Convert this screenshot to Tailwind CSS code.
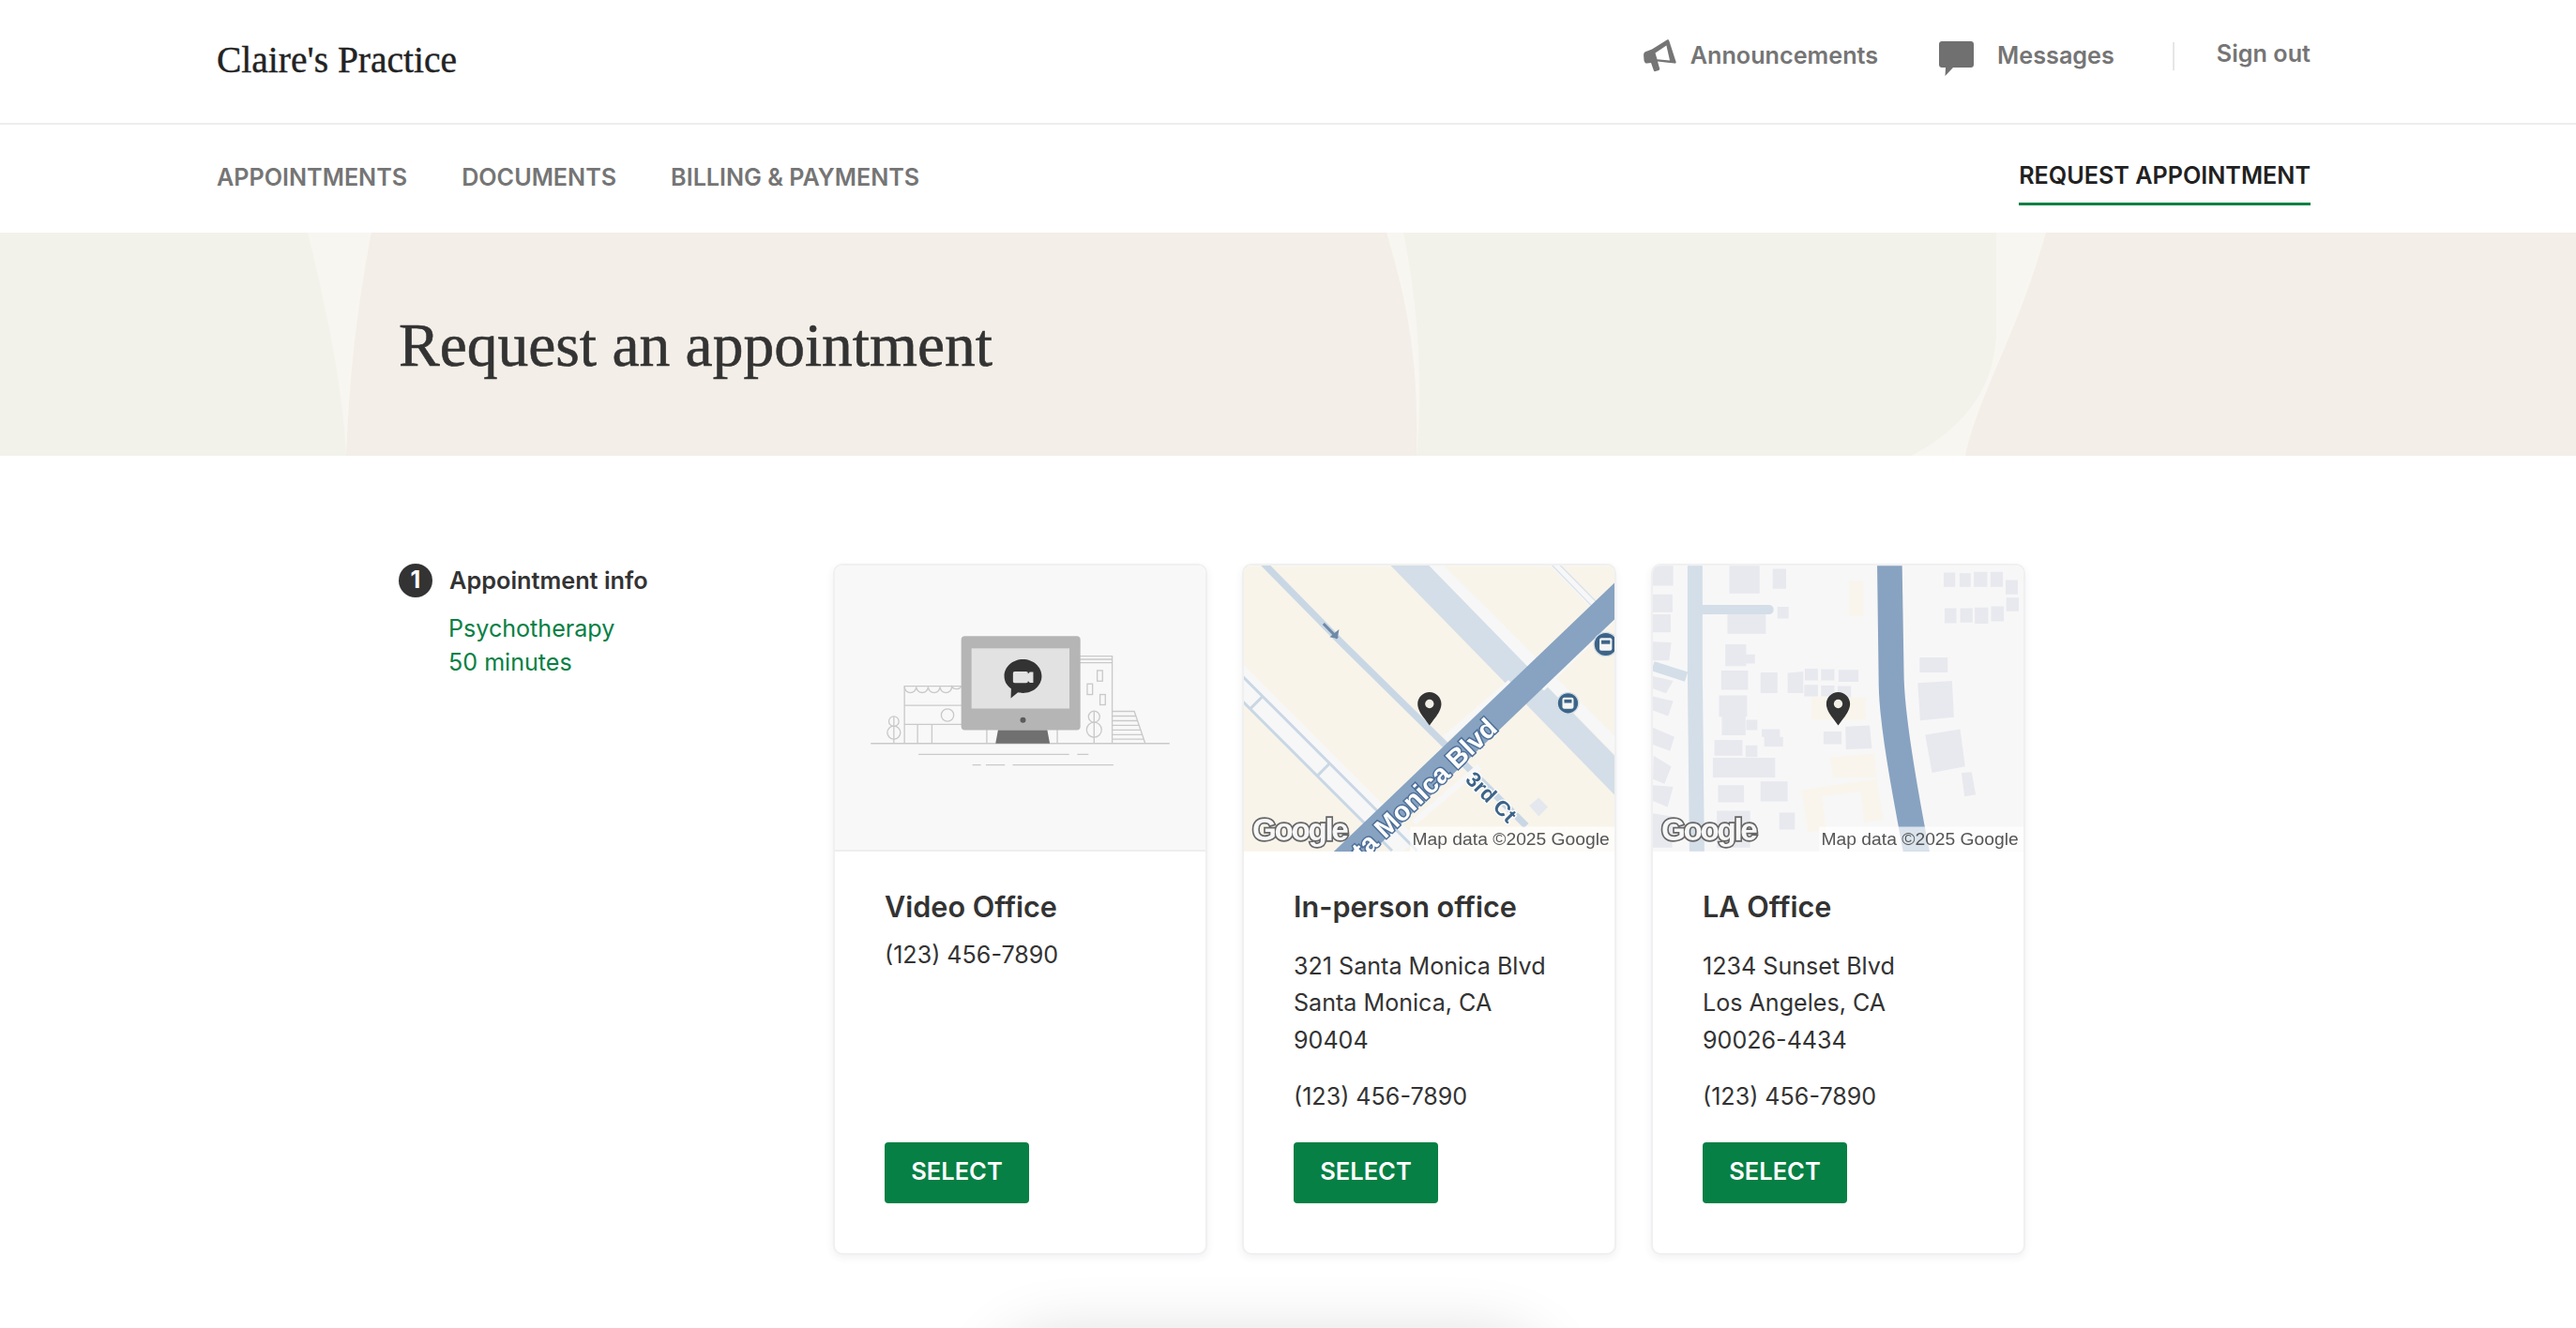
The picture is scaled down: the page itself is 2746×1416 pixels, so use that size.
<!DOCTYPE html>
<html lang="en">
<head>
  <meta charset="UTF-8" />
  <title>Request an appointment</title>
  <script src="https://cdn.jsdelivr.net/npm/@tailwindcss/browser@4"></script>
</head>
<body class="relative h-[1416px] overflow-hidden bg-white font-['Inter',sans-serif] text-[#333333]">

  <!-- top bar -->
  <header class="flex h-[133px] items-center justify-between border-b-2 border-[#ededed] pl-[231px] pr-[283px]">
    <div class="font-['Liberation_Serif',serif] text-[39.500px] leading-none text-[#222222] mb-[1px] [-webkit-text-stroke:0.4px]">Claire's Practice</div>
    <div class="flex items-center text-[25.200px] font-semibold text-[#757575] mb-[12px]">
      <svg class="mr-[15px] h-[35px] w-[35px]" viewBox="0 0 35 35">
        <path fill="#757575" fill-rule="evenodd" d="M25 0.5c1 -.5 2 0 2.300 1L34.600 24c.3 1 -.4 1.800 -1.400 1.600L15 23.600l2.200 7.600c.2.8 -.2 1.400 -1 1.700l-3.600 1.200c-.8.2 -1.400 -.1 -1.700 -.9L8 25 4 25.600C2 25.800 1 24.500.5 22.500L.1 17C0 15 .8 13.500 2.500 13L9 10.500zM24.400 6.500 12.500 14.500l2 6.700 13.500 1.300z"/>
      </svg>
      <span>Announcements</span>
      <svg class="ml-[65px] mr-[25px] mt-[6px] h-[37px] w-[37px]" viewBox="0 0 37 37">
        <path fill="#707070" d="M3 0h31c1.700 0 3 1.300 3 3v22c0 1.700 -1.300 3 -3 3H15L6.500 37l.5 -9H3c-1.700 0 -3 -1.300 -3 -3V3c0 -1.700 1.300 -3 3 -3z"/>
      </svg>
      <span>Messages</span>
      <span class="ml-[62px] mr-[45px] h-[30px] w-[2px] bg-[#e6e6e6]"></span>
      <span class="mb-[4px]">Sign out</span>
    </div>
  </header>

  <!-- section nav -->
  <nav class="flex h-[115px] justify-between pl-[231px] pr-[283px] text-[25.150px] font-semibold text-[#757575]">
    <div class="flex items-center gap-[58px] mb-[2px]">
      <a>APPOINTMENTS</a>
      <a>DOCUMENTS</a>
      <a>BILLING &amp; PAYMENTS</a>
    </div>
    <a class="mt-[37px] h-[49px] border-b-[3px] border-[#068044] leading-[35px] text-[#212121]">REQUEST APPOINTMENT</a>
  </nav>

  <!-- banner -->
  <section class="relative flex h-[238px] items-center bg-[#f3eee7] pl-[425px]">
    <svg class="absolute left-0 top-0 h-[238px] w-[2746px]" viewBox="0 0 2746 238">
      <path fill="#f3f2ea" d="M0 0H328C350 90 366 170 369 238H0z"/>
      <path fill="#f8f6f1" d="M328 0H396C380 80 372 160 369 238C366 170 350 90 328 0z"/>
      <path fill="#f8f6f1" d="M1478 0H2181C2150 110 2110 170 2095 238H1510C1512 150 1505 90 1478 0z"/>
      <path fill="#f3f2ea" d="M1496 0H2128V110C2125 170 2090 210 2038 238H1510C1516 170 1514 90 1496 0z"/>
    </svg>
    <h1 class="relative mt-[4px] font-['Liberation_Serif',serif] text-[65.500px] leading-none text-[#333333] [-webkit-text-stroke:0.6px]">Request an appointment</h1>
  </section>

  <!-- step + location cards -->
  <main class="flex pl-[425px] pt-[115px]">
    <aside class="w-[463px]">
      <div class="flex items-center">
        <span class="flex h-[36px] w-[36px] items-center justify-center rounded-full bg-[#333333] text-[25px] font-bold text-white">1</span>
        <span class="ml-[18px] text-[25.300px] font-semibold leading-[36px]">Appointment info</span>
      </div>
      <div class="ml-[53px] mt-[15px] text-[25.100px] leading-[36px] text-[#068044]">
        <div>Psychotherapy</div>
        <div>50 minutes</div>
      </div>
    </aside>

    <div class="flex gap-[37px]">
      <!-- video office -->
      <article class="flex h-[737px] w-[399px] flex-col overflow-hidden rounded-[10px] border-2 border-[#f0f0f0] bg-white shadow-[0_3px_8px_rgba(60,60,100,0.07)]">
        <div class="h-[305px] border-b-2 border-[#eeeeee] bg-[#f8f8f8]">
          <svg class="h-[305px] w-[395px]" viewBox="27 36 1188 916" fill="none" stroke="#c9c9c9" stroke-width="4">
            <path d="M142 606H1100M295 641H778M804 641H840M468 675H495M511 675H572M597 675H920"/>
            <path d="M250 606V422H440M250 484H440M250 545H440M292 545V606M338 545V606M514 555V606M740 555V606"/>
            <path d="M250 424a19 19 0 0 0 38 0a19 19 0 0 0 38 0a19 19 0 0 0 38 0a19 19 0 0 0 38 0a19 19 0 0 0 30 0"/>
            <circle cx="388" cy="515" r="20"/>
            <path d="M216 520V606"/><circle cx="216" cy="535" r="16"/><circle cx="216" cy="571" r="21"/>
            <path d="M810 326H916V606M810 336H916M810 347H916"/>
            <rect x="868" y="372" width="17" height="34"/><rect x="836" y="415" width="17" height="34"/><rect x="877" y="449" width="17" height="33"/>
            <path d="M858 502V606"/><circle cx="858" cy="520" r="18"/><circle cx="858" cy="562" r="24"/>
            <path d="M916 503H987L1022 606M916 518H992M916 533H997M916 548H1002M916 563H1007M916 578H1012M916 592H1017"/>
            <rect x="432" y="262" width="382" height="301" rx="12" fill="#b5b5b5" stroke="none"/>
            <rect x="465" y="301" width="314" height="193" fill="#e2e2e2" stroke="none"/>
            <path d="M550 563H708L716 606H542z" fill="#707070" stroke="none"/>
            <circle cx="630" cy="531" r="9" fill="#5b5b5b" stroke="none"/>
            <path d="M630 336c33 0 60 24 60 54s-27 54 -60 54c-8 0 -14 -1 -16 -2l-23 19 1 -31c-14 -10 -22 -24 -22 -40 0 -30 27 -54 60 -54z" fill="#333333" stroke="none"/>
            <path d="M604 375h36c4 0 6 2 6 6v2l6 -6 11 0v34l-11 0 -6 -6v2c0 3 -2 5 -6 5h-36c-4 0 -6 -2 -6 -5v-26c0 -4 2 -6 6 -6z" fill="#e2e2e2" stroke="none"/>
          </svg>
        </div>
        <div class="flex flex-1 flex-col px-[53px] pb-[53px] pt-[37px]">
          <h2 class="text-[30.600px] font-semibold leading-[44px]">Video Office</h2>
          <p class="mt-[10px] text-[25.100px] leading-[39.400px] text-[#333333]">(123) 456-7890</p>
          <button class="mt-auto h-[65px] w-[154px] rounded-[4px] bg-[#068044] pb-[2px] text-[25.500px] font-semibold text-white">SELECT</button>
        </div>
      </article>

      <!-- in-person office -->
      <article class="flex h-[737px] w-[399px] flex-col overflow-hidden rounded-[10px] border-2 border-[#f0f0f0] bg-white shadow-[0_3px_8px_rgba(60,60,100,0.07)]">
        <div class="h-[305px]">
          <svg class="h-[305px] w-[395px] blur-[0.4px]" viewBox="45 36 1188 916" fill="none" stroke-linecap="butt">
            <rect x="45" y="36" width="1188" height="916" fill="#f8f4ea"/>
            <path d="M558 -64L1333 710" stroke="#f7f7f7" stroke-width="40"/>
            <path d="M478 -66L1333 810" stroke="#d3dee8" stroke-width="88"/>
            <path d="M1000 -10L1165 160" stroke="#f7f7f7" stroke-width="26"/>
            <path d="M990 -10L1160 165M1015 -10L1178 155" stroke="#d9e2eb" stroke-width="4"/>
            <path d="M90 10L360 285L690 610L770 690L950 870" stroke="#c9d7e5" stroke-width="22"/>
            <path d="M0 330L620 950" stroke="#f7f7f7" stroke-width="28"/>
            <path d="M0 390L560 950" stroke="#f7f7f7" stroke-width="57"/>
            <path d="M0 350L600 950M0 430L520 950" stroke="#c9d7e5" stroke-width="9"/>
            <path d="M105 455L65 495M320 670L280 710" stroke="#c9d7e5" stroke-width="9"/>
            <path d="M690 590L900 410M1000 430L1233 200M590 860L800 680" stroke="#f7f7f7" stroke-width="20"/>
            <path d="M1333 54L295 1048" stroke="#87a3c1" stroke-width="85"/>
            <path d="M300 222L345 268" stroke="#6f8aa8" stroke-width="9"/><path d="M345 270L350 240L320 265z" fill="#6f8aa8"/>
            <path d="M960 805l30 -25 30 30 -30 30z" fill="#e4e8ee"/>
            <circle cx="1205" cy="288" r="38" fill="#3d6488" stroke="#d3dee8" stroke-width="4"/>
            <rect x="1185" y="268" width="40" height="40" rx="6" fill="#f5f5f5"/><rect x="1191" y="275" width="28" height="12" fill="#3d6488"/>
            <circle cx="1084" cy="477" r="34" fill="#3d6488" stroke="#d3dee8" stroke-width="4"/>
            <rect x="1066" y="459" width="36" height="36" rx="6" fill="#f5f5f5"/><rect x="1072" y="465" width="24" height="11" fill="#3d6488"/>
            <text transform="translate(862 562) rotate(-44)" text-anchor="end" font-family="Liberation Sans" font-weight="700" font-size="86" fill="#ffffff" stroke="#4d6f99" stroke-width="9" paint-order="stroke">Santa Monica Blvd</text>
            <text transform="translate(752 725) rotate(45)" font-family="Liberation Sans" font-weight="700" font-size="68" fill="#3d6488" stroke="#ffffff" stroke-width="8" paint-order="stroke">3rd Ct</text>
            <path d="M640 441c21 0 38 17 38 38 0 25 -25 50 -38 69c-13 -19 -38 -44 -38 -69 0 -21 17 -38 38 -38z" fill="#333333"/>
            <circle cx="640" cy="479" r="14" fill="#f2efe6"/>
            <rect x="578" y="873" width="655" height="79" fill="#ffffff" fill-opacity="0.7"/>
            <text x="585" y="932" font-family="Liberation Sans" font-size="58" fill="#555555">Map data ©2025 Google</text>
            <text x="72" y="918" font-family="Liberation Sans" font-weight="700" font-size="100" letter-spacing="-7" fill="#f7f7f7" stroke="#666666" stroke-width="10" paint-order="stroke">Google</text>
          </svg>
        </div>
        <div class="flex flex-1 flex-col px-[53px] pb-[53px] pt-[37px]">
          <h2 class="text-[30.600px] font-semibold leading-[44px]">In-person office</h2>
          <p class="mt-[22px] text-[25.100px] leading-[39.400px]">321 Santa Monica Blvd<br>Santa Monica, CA<br>90404</p>
          <p class="mt-[21px] text-[25.100px] leading-[39.400px]">(123) 456-7890</p>
          <button class="mt-auto h-[65px] w-[154px] rounded-[4px] bg-[#068044] pb-[2px] text-[25.500px] font-semibold text-white">SELECT</button>
        </div>
      </article>

      <!-- la office -->
      <article class="flex h-[737px] w-[399px] flex-col overflow-hidden rounded-[10px] border-2 border-[#f0f0f0] bg-white shadow-[0_3px_8px_rgba(60,60,100,0.07)]">
        <div class="h-[305px]">
          <svg class="h-[305px] w-[395px] blur-[0.4px]" viewBox="63 36 1188 916" fill="none">
            <rect x="63" y="36" width="1188" height="916" fill="#f7f7f7"/>
            <g fill="#e8e9ef">
              <path d="M63 36H128V100H63zM63 128H126V185H63zM63 192H120V250H63zM63 280L122 282L115 340H63zM63 390L128 405L105 445L63 430zM63 455L128 470L112 518L63 500zM63 555L132 585L118 630L63 610zM65 645L122 680L100 735L63 720zM63 740L128 745L110 810L63 790zM63 830L125 840V940H63z"/>
              <path d="M308 36H405V125H308zM447 46H490V110H447zM302 182H425V254H302zM462 168H498V205H462zM295 288H362V358H295zM362 320H390V350H362zM282 372H368V434H282zM408 378H462V444H408zM495 380L545 375V444H495z"/>
              <path d="M550 366H592V404H550zM602 368H645V404H602zM658 370H722V408H658zM548 418H592V455H548zM602 420H645V455H602zM655 422H698V460H655z"/>
              <path d="M275 452H365V520H275zM284 520H360V580H284zM362 530H398V563H362zM412 560H470V585H412zM420 585H480V616H420zM260 595H350V645H260zM360 612H398V650H360zM255 652H455V715H255zM272 740H355V795H272zM408 728H495V792H408zM268 822H375V940H268zM468 828H518V882H468z"/>
              <path d="M610 568H668V608H610zM680 552L758 548L765 622L682 625zM995 58H1032V104H995zM1046 60H1082V104H1046zM1092 56H1135V104H1092zM1145 56H1185V104H1145zM1194 82H1233V128H1194zM1196 138H1236V182H1196zM998 172H1036V220H998zM1048 172H1088V218H1048zM1095 170H1138V222H1095zM1147 166H1188V214H1147z"/>
              <path d="M918 330H1008V378H918zM912 412L1022 405L1028 522L920 532zM936 578L1048 560L1064 680L958 700zM1052 700L1085 698L1098 770L1062 776z"/>
            </g>
            <g fill="#f9f5ec">
              <path d="M692 85H738V198H692zM572 458H745V530H572zM632 650L775 638L780 715L640 715zM540 755L780 720L802 850L740 860L730 760L605 775L618 885L560 890z"/>
            </g>
            <path d="M198 36V380L204 952" stroke="#d3dee8" stroke-width="48"/>
            <path d="M222 177H435" stroke="#d3dee8" stroke-width="30" stroke-linecap="round"/>
            <path d="M63 358L170 392" stroke="#d3dee8" stroke-width="32"/>
            <path d="M782 36H862L868 400C872 520 905 720 950 952H865C830 760 790 560 787 420z" fill="#88a3c1"/>
            <path d="M657 441c21 0 38 17 38 38 0 25 -25 50 -38 69c-13 -19 -38 -44 -38 -69 0 -21 17 -38 38 -38z" fill="#333333"/>
            <circle cx="657" cy="479" r="14" fill="#f2efe6"/>
            <rect x="596" y="873" width="655" height="79" fill="#ffffff" fill-opacity="0.7"/>
            <text x="603" y="932" font-family="Liberation Sans" font-size="58" fill="#555555">Map data ©2025 Google</text>
            <text x="90" y="918" font-family="Liberation Sans" font-weight="700" font-size="100" letter-spacing="-7" fill="#f7f7f7" stroke="#666666" stroke-width="10" paint-order="stroke">Google</text>
          </svg>
        </div>
        <div class="flex flex-1 flex-col px-[53px] pb-[53px] pt-[37px]">
          <h2 class="text-[30.600px] font-semibold leading-[44px]">LA Office</h2>
          <p class="mt-[22px] text-[25.100px] leading-[39.400px]">1234 Sunset Blvd<br>Los Angeles, CA<br>90026-4434</p>
          <p class="mt-[21px] text-[25.100px] leading-[39.400px]">(123) 456-7890</p>
          <button class="mt-auto h-[65px] w-[154px] rounded-[4px] bg-[#068044] pb-[2px] text-[25.500px] font-semibold text-white">SELECT</button>
        </div>
      </article>
    </div>
  </main>

  <!-- shadow of a panel sitting just below the fold -->
  <div class="absolute bottom-0 left-0 h-[78px] w-full overflow-hidden">
    <div class="ml-[1090px] mt-[115px] h-[60px] w-[530px] rounded-[40px] bg-white shadow-[0_0_70px_25px_rgba(0,0,0,0.16)]"></div>
  </div>
</body>
</html>
